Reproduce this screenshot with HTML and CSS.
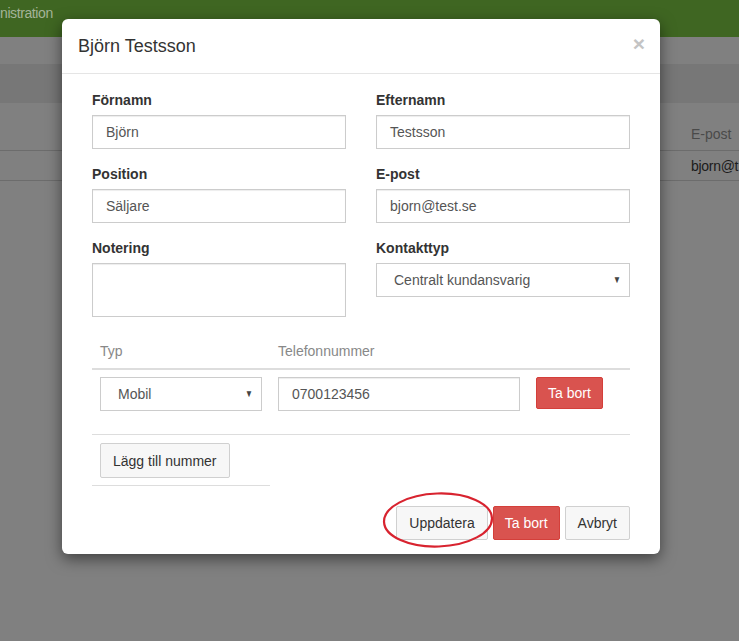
FILE: index.html
```html
<!DOCTYPE html>
<html lang="sv">
<head>
<meta charset="utf-8">
<title>Björn Testsson</title>
<link rel="stylesheet" href="styles.css">
</head>
<body>
<div class="page">
  <div class="navbar"><span class="brand">nistration</span></div>
  <div class="spacer"></div>
  <div class="band"></div>
  <div class="table-head"><span class="col-email">E-post</span></div>
  <div class="table-row"><span class="col-email cell">bjorn@t</span></div>
</div>

<div class="modal">
  <div class="modal-header">
    <h4 class="modal-title">Björn Testsson</h4>
    <span class="close">×</span>
  </div>
  <div class="modal-body">
    <div class="grid">
      <div class="form-group">
        <label>Förnamn</label>
        <div class="input">Björn</div>
      </div>
      <div class="form-group">
        <label>Efternamn</label>
        <div class="input">Testsson</div>
      </div>
      <div class="form-group">
        <label>Position</label>
        <div class="input">Säljare</div>
      </div>
      <div class="form-group">
        <label>E-post</label>
        <div class="input">bjorn@test.se</div>
      </div>
      <div class="form-group">
        <label>Notering</label>
        <div class="input textarea"></div>
      </div>
      <div class="form-group">
        <label>Kontakttyp</label>
        <div class="input select"><span>Centralt kundansvarig</span><span class="caret">▼</span></div>
      </div>
    </div>

    <div class="phones">
      <div class="ph-head">
        <div class="c1">Typ</div>
        <div class="c2">Telefonnummer</div>
        <div class="c3"></div>
      </div>
      <div class="ph-row">
        <div class="c1"><div class="input select"><span>Mobil</span><span class="caret">▼</span></div></div>
        <div class="c2"><div class="input">0700123456</div></div>
        <div class="c3"><span class="btn btn-danger small">Ta bort</span></div>
      </div>
      <div class="ph-add">
        <div class="c1 add-cell"><span class="btn btn-default">Lägg till nummer</span></div>
      </div>
    </div>
  </div>
  <div class="modal-footer">
    <span class="btn btn-default">Uppdatera</span>
    <span class="btn btn-danger">Ta bort</span>
    <span class="btn btn-default">Avbryt</span>
  </div>
  <svg class="circle" width="120" height="64" viewBox="0 0 120 64">
    <ellipse cx="60" cy="32" rx="54" ry="26.5" fill="none" stroke="#d8232f" stroke-width="2.2" transform="rotate(-2 60 32)"/>
  </svg>
</div>
</body>
</html>
```

FILE: styles.css
```css
* { box-sizing: border-box; }
html, body { margin: 0; padding: 0; }
body {
  background: #808080;
  font-family: "Liberation Sans", Arial, sans-serif;
  font-size: 14px;
  line-height: 20px;
  color: #333;
  width: 739px;
  height: 641px;
  overflow: hidden;
}
.page { display: flex; flex-direction: column; }
.navbar {
  height: 37px;
  background: #3f6622;
  display: flex;
  align-items: flex-start;
}
.brand {
  margin-left: 0;
  margin-top: 3px;
  color: #a4b498;
  font-size: 14px;
  letter-spacing: -0.4px;
}
.spacer { height: 27px; }
.band { height: 39px; background: #777777; }
.table-head {
  height: 48px;
  border-bottom: 1px solid #6c6c6c;
  display: flex;
  align-items: flex-end;
  padding-bottom: 6px;
}
.table-row {
  height: 30px;
  border-bottom: 1px solid #6c6c6c;
  display: flex;
  align-items: center;
}
.col-email { margin-left: 691px; color: #4a4a4a; white-space: nowrap; }
.cell { color: #1b1b1b; letter-spacing: -0.3px; }

.modal {
  position: absolute;
  left: 62px;
  top: 19px;
  width: 598px;
  background: #fff;
  border-radius: 6px;
  box-shadow: 0 5px 15px rgba(0,0,0,0.5);
  display: flex;
  flex-direction: column;
}
.modal-header {
  flex-shrink: 0;
  height: 55px;
  padding: 0 15px 0 16px;
  border-bottom: 1px solid #e5e5e5;
  display: flex;
  align-items: center;
  justify-content: space-between;
}
.modal-title {
  margin: 0;
  font-size: 18px;
  font-weight: normal;
  color: #333;
  padding-bottom: 1px;
}
.close {
  font-size: 21px;
  font-weight: bold;
  color: #c4c4c4;
  margin-top: -4px;
}
.modal-body { padding: 16px 30px 0 30px; }
.grid {
  display: grid;
  grid-template-columns: 254px 254px;
  column-gap: 30px;
}
.form-group { margin-bottom: 15px; display: flex; flex-direction: column; }
label { font-weight: bold; margin-bottom: 5px; color: #333; }
.input {
  height: 34px;
  border: 1px solid #ccc;
  padding: 6px 12px 6px 13px;
  color: #555;
  background: #fff;
  box-shadow: inset 0 1px 1px rgba(0,0,0,0.075);
  white-space: nowrap;
}
.textarea { height: 54px; }
.select {
  display: flex;
  justify-content: space-between;
  align-items: center;
  padding: 6px 7px 6px 17px;
  box-shadow: none;
}
.caret { font-size: 10px; color: #444; line-height: 10px; transform: scaleX(0.8); }

.phones { display: flex; flex-direction: column; }
.ph-head, .ph-row, .ph-add { display: flex; }
.c1 { width: 178px; padding: 8px; }
.c2 { width: 258px; padding: 8px; }
.c3 { width: 102px; padding: 8px; }
.ph-head { border-bottom: 2px solid #ddd; color: #888; height: 38px; }
.ph-head .c1, .ph-head .c2 { padding-top: 9px; }
.ph-row { height: 65px; border-bottom: 1px solid #ddd; }
.ph-row .c1, .ph-row .c2, .ph-row .c3 { padding-top: 7px; }
.add-cell { border-bottom: 1px solid #ddd; height: 51px; }

.btn {
  display: inline-flex;
  align-items: center;
  justify-content: center;
  height: 34px;
  padding: 0 12px;
  border: 1px solid #ccc;
  border-radius: 2px;
  white-space: nowrap;
  font-size: 14px;
}
.btn-default { background: #f7f7f7; color: #333; border-color: #d0d0d0; }
.btn-danger { background: #d9534f; color: #fff; border-color: #d43f3a; padding: 0 11px; }
.small { height: 32px; }
.add-cell .btn { height: 35px; }

.modal-footer {
  display: flex;
  justify-content: flex-end;
  gap: 5px;
  padding: 20px 30px 14px 30px;
}
.circle {
  position: absolute;
  left: 316px;
  top: 469px;
}
```
